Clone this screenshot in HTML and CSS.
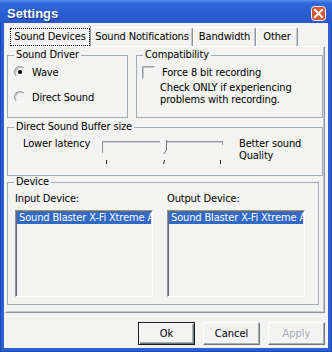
FILE: index.html
```html
<!DOCTYPE html>
<html lang="en">
<head>
<meta charset="UTF-8" />
<title>Settings</title>
<link rel="stylesheet" href="styles.css">
</head>
<body>

<div class="window">
  <div class="titlebar">
    <span class="title">Settings</span>
    <span class="close-btn">
      <svg width="15" height="15" viewBox="0 0 15 15">
        <rect x="0.5" y="0.5" width="14" height="14" rx="3" fill="#d8552f" stroke="#f3f3f3"/>
        <path d="M4 4 L11 11 M11 4 L4 11" stroke="#fff" stroke-width="2" stroke-linecap="square"/>
      </svg>
    </span>
  </div>

  <div class="client">
    <div class="tabs">
      <div class="tab active"><span class="focus">Sound Devices</span></div>
      <div class="tab notif">Sound Notifications</div>
      <div class="tab bw">Bandwidth</div>
      <div class="tab other">Other</div>
    </div>

    <div class="panel">
      <div class="row-top">
        <fieldset class="group driver">
          <legend>Sound Driver</legend>
          <div class="gbody">
            <label class="opt"><span class="radio checked"></span>Wave</label>
            <label class="opt second"><span class="radio"></span>Direct Sound</label>
          </div>
        </fieldset>
        <fieldset class="group compat">
          <legend>Compatibility</legend>
          <div class="gbody">
            <label class="opt"><span class="check"></span>Force 8 bit recording</label>
            <p class="hint">Check ONLY if experiencing<br>problems with recording.</p>
          </div>
        </fieldset>
      </div>

      <fieldset class="group buffer">
        <legend>Direct Sound Buffer size</legend>
        <div class="gbody slider-row">
          <span class="lo">Lower latency</span>
          <svg class="slider" width="125" height="28" viewBox="0 0 125 28">
            <!-- groove -->
            <path d="M2 3.5 H60 M67 3.5 H123" stroke="#8d939a"/>
            <path d="M3 4.5 H60 M67 4.5 H122" stroke="#d3d6da"/>
            <path d="M2.5 3 V15" stroke="#8d939a"/>
            <path d="M122.5 3 V7" stroke="#8d939a"/>
            <!-- thumb -->
            <path d="M66.5 2 V12 L63.5 16" stroke="#6a7178" fill="none"/>
            <!-- ticks -->
            <path d="M6.5 22 V26 M64.5 22 L63.5 26 M120.5 22 V26" stroke="#222"/>
          </svg>
          <span class="hi">Better sound<br>Quality</span>
        </div>
      </fieldset>

      <fieldset class="group device">
        <legend>Device</legend>
        <div class="gbody devices">
          <div class="dev">
            <div class="dev-label">Input Device:</div>
            <div class="listbox"><div class="item sel">Sound Blaster X-Fi Xtreme A</div></div>
          </div>
          <div class="dev">
            <div class="dev-label">Output Device:</div>
            <div class="listbox"><div class="item sel">Sound Blaster X-Fi Xtreme A</div></div>
          </div>
        </div>
      </fieldset>
    </div>

    <div class="buttons">
      <button class="btn default">Ok</button>
      <button class="btn">Cancel</button>
      <button class="btn" disabled>Apply</button>
    </div>
  </div>
</div>

</body>
</html>
```

FILE: styles.css
```css
/* — base — */
*{box-sizing:border-box;}
body{
  margin:0;background:#fff;color:#000;
  font-family:"DejaVu Sans Condensed","DejaVu Sans",sans-serif;font-stretch:condensed;font-size:11px;
  letter-spacing:-0.15px;
}

/* — window frame — */
.window{
  width:332px;height:352px;display:flex;flex-direction:column;
  background:#2b5fd2;box-shadow:inset 0 0 0 1px #1d47ad;
}
.titlebar{
  height:23px;flex:none;display:flex;align-items:flex-start;padding:6px 6px 0 7px;
  background:linear-gradient(#5a8ff0 0,#3069da 3px,#2b5fd2 50%,#2858cc 100%);
}
.title{font:bold 13px/15px "Liberation Sans",Arial,sans-serif;letter-spacing:0;color:#fff;text-shadow:1px 1px 0 #17327e;}
.close-btn{margin-left:auto;width:15px;height:15px;line-height:0;}

.client{flex:1;margin:0 4px 4px;background:#f3f3f2;display:flex;flex-direction:column;}

/* — tabs — */
.tabs{height:23px;flex:none;display:flex;align-items:flex-end;padding-left:3px;}
.tab{
  width:63px;height:19px;line-height:17px;text-align:center;white-space:nowrap;
  border:1px solid #fff;border-bottom:0;border-right-color:#8d939a;
  box-shadow:inset -1px 0 #c6cacf;border-radius:2px 2px 0 0;
}
.tab.active{width:84px;height:21px;padding:2px 0 0 2px;}
.tab.notif{width:102px;}
.tab.bw{width:63px;}
.tab.other{width:42px;}
.focus{display:block;width:80px;height:18px;line-height:16px;border:1px dotted #000;}

/* — tab page — */
.panel{
  margin-left:1px;width:320px;height:267px;flex:none;padding:2px 1px 0 1px;
  border:1px solid;border-color:#fff #8d939a #8d939a #fff;box-shadow:inset -1px -1px #c6cacf;
}
.row-top{display:grid;grid-template-columns:121px 187px;column-gap:8px;}

.group{margin:0;padding:0;min-width:0;border:1px solid #a3adb8;}
.group legend{margin-left:6px;padding:0 2px;line-height:12px;}
.driver,.compat{height:69px;}
.buffer{height:55px;margin-top:3px;}
.device{height:129px;width:312px;}

/* — radios / checkbox — */
.opt{display:flex;align-items:center;gap:6px;height:14px;}
.driver .gbody{padding:4px 0 0 6px;}
.driver .second{margin-top:11px;}
.radio{
  position:relative;width:12px;height:12px;border-radius:50%;border:1px solid;
  border-color:#979da5 #f7f7f7 #f7f7f7 #979da5;box-shadow:inset 1px 1px #c3c7cc;
}
.radio.checked::after{
  content:"";position:absolute;left:3px;top:3px;width:4px;height:4px;border-radius:50%;background:#000;
}

.compat .gbody{padding:5px 0 0 5px;}
.compat .opt{height:13px;gap:7px;}
.check{
  width:13px;height:13px;border:1px solid;
  border-color:#9ba1a8 #f7f7f7 #f7f7f7 #9ba1a8;box-shadow:inset 1px 1px #c3c7cc;
}
.hint{margin:3px 0 0 18px;line-height:12px;}

/* — slider row — */
.slider-row{display:flex;align-items:flex-start;padding:5px 0 0 15px;line-height:12px;}
.lo{width:77px;white-space:nowrap;}
.slider{flex:none;}
.hi{margin-left:14px;}

/* — device lists — */
.devices{display:grid;grid-template-columns:138px 138px;column-gap:14px;padding:5px 0 0 7px;}
.dev-label{line-height:12px;margin-bottom:5px;white-space:nowrap;}
.listbox{
  height:87px;padding:1px;overflow:hidden;
  border:1px solid;border-color:#8a9199 #fff #fff #8a9199;box-shadow:inset 1px 1px #646b73;
}
.item{height:12px;line-height:12px;padding-left:2px;white-space:nowrap;overflow:hidden;}
.item.sel{background:#316ac5;color:#fff;}

/* — dialog buttons — */
.buttons{display:flex;justify-content:flex-end;gap:8px;margin-top:9px;padding-right:3px;}
.btn{
  width:57px;height:23px;padding:0;font:inherit;line-height:21px;color:#000;background:#f3f3f2;
  border:1px solid;border-color:#fff #6f757c #6f757c #fff;box-shadow:inset -1px -1px #aab0b6;
}
.btn.default{border-color:#1a1a1a;box-shadow:inset 1px 1px #fff,inset -1px -1px #6f757c,inset -2px -2px #aab0b6;}
.btn:disabled{color:#a3a7ac;text-shadow:1px 1px #fff;}
```
